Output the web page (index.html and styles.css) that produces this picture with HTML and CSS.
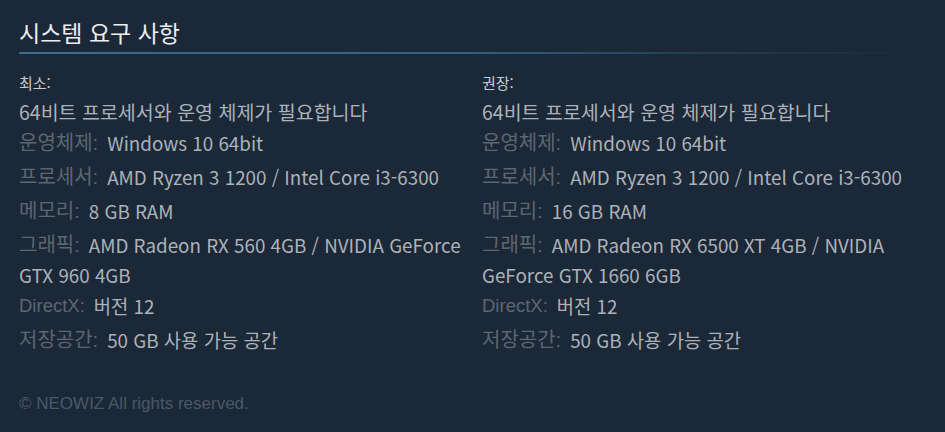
FILE: index.html
```html
<!DOCTYPE html>
<html lang="ko">
<head>
<meta charset="utf-8">
<title>시스템 요구 사항</title>
<link rel="stylesheet" href="styles.css">
</head>
<body>
<div class="page">
  <h2 class="heading">시스템 요구 사항</h2>
  <div class="cols">
    <div class="col">
      <div class="col-title">최소:</div>
      <ul class="reqs">
        <li class="req note tight">64비트 프로세서와 운영 체제가 필요합니다</li>
        <li class="req"><span class="label">운영체제:</span><span class="value">Windows 10 64bit</span></li>
        <li class="req"><span class="label">프로세서:</span><span class="value">AMD Ryzen 3 1200 / Intel Core i3-6300</span></li>
        <li class="req"><span class="label">메모리:</span><span class="value">8 GB RAM</span></li>
        <li class="req tight"><span class="label">그래픽:</span><span class="value">AMD Radeon RX 560 4GB / NVIDIA GeForce GTX 960 4GB</span></li>
        <li class="req"><span class="label latin">DirectX:</span><span class="value">버전 12</span></li>
        <li class="req"><span class="label">저장공간:</span><span class="value">50 GB 사용 가능 공간</span></li>
      </ul>
    </div>
    <div class="col">
      <div class="col-title">권장:</div>
      <ul class="reqs">
        <li class="req note tight">64비트 프로세서와 운영 체제가 필요합니다</li>
        <li class="req"><span class="label">운영체제:</span><span class="value">Windows 10 64bit</span></li>
        <li class="req"><span class="label">프로세서:</span><span class="value">AMD Ryzen 3 1200 / Intel Core i3-6300</span></li>
        <li class="req"><span class="label">메모리:</span><span class="value">16 GB RAM</span></li>
        <li class="req tight"><span class="label">그래픽:</span><span class="value">AMD Radeon RX 6500 XT 4GB / NVIDIA GeForce GTX 1660 6GB</span></li>
        <li class="req"><span class="label latin">DirectX:</span><span class="value">버전 12</span></li>
        <li class="req"><span class="label">저장공간:</span><span class="value">50 GB 사용 가능 공간</span></li>
      </ul>
    </div>
  </div>
  <p class="footer">© NEOWIZ All rights reserved.</p>
</div>
</body>
</html>
```

FILE: styles.css
```css
* { box-sizing: border-box; }
html, body {
  margin: 0;
  padding: 0;
  background: #1b2838;
}
body {
  font-family: "Noto Sans CJK KR", "Noto Sans", sans-serif;
  color: #acb2b8;
}
.page {
  padding: 18px 19px 0 19px;
}
.heading {
  margin: 0;
  font-size: 23px;
  font-weight: 400;
  line-height: 29px;
  color: #eceef0;
}
.heading::after {
  content: "";
  display: block;
  height: 2px;
  margin-top: 5px;
  background: linear-gradient(to right, #3d6d8d 0%, #33607e 50%, rgba(45, 82, 108, 0.5) 75%, rgba(27, 40, 56, 0) 100%);
}
.cols {
  display: grid;
  grid-template-columns: 1fr 1fr;
  column-gap: 19px;
  margin-top: 19px;
}
.col-title {
  font-size: 15px;
  line-height: 20px;
  color: #c6cbd0;
  margin-bottom: 3px;
}
.reqs {
  list-style: none;
  margin: 0;
  padding: 0;
}
.req {
  font-size: 18.8px;
  line-height: 30px;
  padding: 1px 0 3px 0;
}
.req.note {
  font-size: 19.5px;
}
.req.tight {
  padding-bottom: 0;
}
.req span {
  vertical-align: top;
}
.label {
  font-family: "Liberation Sans", "Noto Sans CJK KR", sans-serif;
  font-size: 20px;
  color: #5e6670;
  margin-right: 9px;
}
.label.latin {
  font-size: 18.5px;
  margin-right: 9px;
}
.value {
  color: #acb2b8;
}
.footer {
  margin: 37px 0 0 0;
  font-family: "Liberation Sans", Arial, sans-serif;
  font-size: 17px;
  line-height: 18px;
  color: #4b5866;
}
```
